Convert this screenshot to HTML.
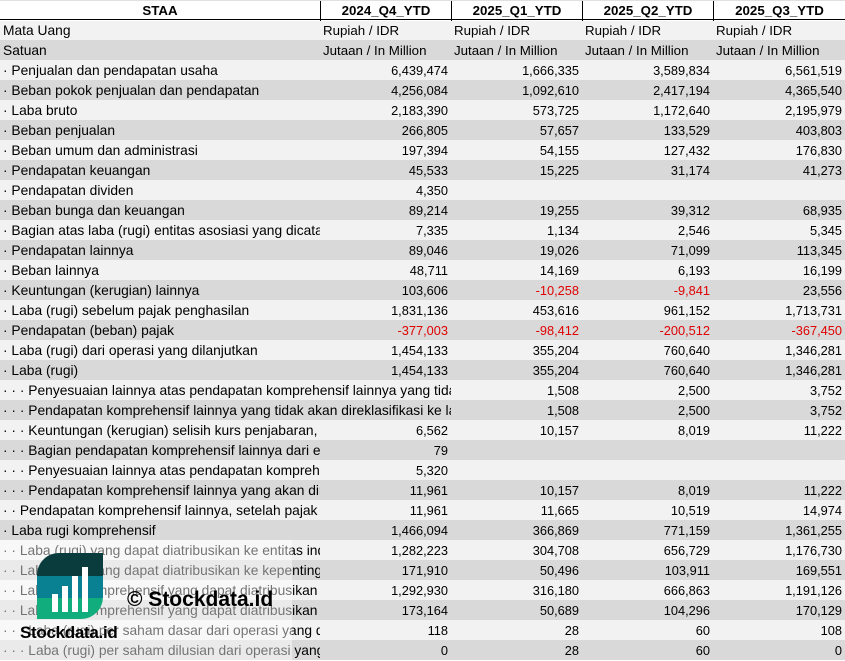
<!DOCTYPE html>
<html><head><meta charset="utf-8"><style>
*{margin:0;padding:0;box-sizing:border-box}
body{width:845px;height:661px;overflow:hidden;background:#fff;font-family:"Liberation Sans",Calibri,sans-serif;font-size:13.3px;color:#000;position:relative}
.r{position:absolute;left:0;width:845px;height:20px;line-height:21px}
.l{background:#f2f2f2}.g{background:#d9d9d9}
.c{position:absolute;top:0;height:20px;white-space:nowrap;overflow:hidden}
.lab{left:3px;width:317px;font-size:13.8px}
.n{text-align:right;font-size:12.8px}
.n1{left:320px;width:128px}.n2{left:451px;width:128px}.n3{left:582px;width:128px}.n4{left:713px;width:129px}
.t1{left:323px}.t2{left:454px}.t3{left:585px}.t4{left:716px}
.red{color:#e00000}
.h{font-weight:bold;text-align:center;border-bottom:1px solid #000;border-top:1px solid #e0e0e0;line-height:19px}
.h .c{border-right:1px solid #000}
</style></head><body>
<div class="r h" style="top:0"><div class="c" style="left:0;width:321px">STAA</div><div class="c" style="left:321px;width:131px">2024_Q4_YTD</div><div class="c" style="left:452px;width:131px">2025_Q1_YTD</div><div class="c" style="left:583px;width:131px">2025_Q2_YTD</div><div class="c" style="left:714px;width:131px;border-right:none">2025_Q3_YTD</div></div>
<div class="r l" style="top:21px;height:19px;line-height:20px"><div class="c lab">Mata Uang</div><div class="c t1">Rupiah / IDR</div><div class="c t2">Rupiah / IDR</div><div class="c t3">Rupiah / IDR</div><div class="c t4">Rupiah / IDR</div></div>
<div class="r g" style="top:40px"><div class="c lab">Satuan</div><div class="c t1">Jutaan / In Million</div><div class="c t2">Jutaan / In Million</div><div class="c t3">Jutaan / In Million</div><div class="c t4">Jutaan / In Million</div></div>
<div id="rows"></div>
<div style="position:absolute;left:0;top:540px;width:292px;height:121px;background:rgba(255,255,255,0.45)"></div>
<div style="position:absolute;left:37px;top:553px;width:66px;height:66px;border-radius:22px 0 22px 0;overflow:hidden">
<div style="height:23px;background:#0a3c3d"></div><div style="height:22px;background:#0a8093"></div><div style="height:21px;background:#12ad7c"></div>
<div style="position:absolute;left:15px;top:41px;width:6px;height:18px;background:#fff"></div>
<div style="position:absolute;left:25px;top:33px;width:6px;height:26px;background:#fff"></div>
<div style="position:absolute;left:35px;top:23px;width:6px;height:36px;background:#fff"></div>
<div style="position:absolute;left:45px;top:14px;width:6px;height:45px;background:#fff"></div>
</div>
<div style="position:absolute;left:20px;top:622px;font-weight:bold;font-size:17px;letter-spacing:-0.3px;line-height:22px">Stockdata.id</div>
<div style="position:absolute;left:127px;top:586px;font-weight:bold;font-size:21px;line-height:28px">© Stockdata.id</div>
<script>
var d=[
["· Penjualan dan pendapatan usaha","6,439,474","1,666,335","3,589,834","6,561,519"],
["· Beban pokok penjualan dan pendapatan","4,256,084","1,092,610","2,417,194","4,365,540"],
["· Laba bruto","2,183,390","573,725","1,172,640","2,195,979"],
["· Beban penjualan","266,805","57,657","133,529","403,803"],
["· Beban umum dan administrasi","197,394","54,155","127,432","176,830"],
["· Pendapatan keuangan","45,533","15,225","31,174","41,273"],
["· Pendapatan dividen","4,350","","",""],
["· Beban bunga dan keuangan","89,214","19,255","39,312","68,935"],
["· Bagian atas laba (rugi) entitas asosiasi yang dicatat","7,335","1,134","2,546","5,345"],
["· Pendapatan lainnya","89,046","19,026","71,099","113,345"],
["· Beban lainnya","48,711","14,169","6,193","16,199"],
["· Keuntungan (kerugian) lainnya","103,606","-10,258","-9,841","23,556"],
["· Laba (rugi) sebelum pajak penghasilan","1,831,136","453,616","961,152","1,713,731"],
["· Pendapatan (beban) pajak","-377,003","-98,412","-200,512","-367,450"],
["· Laba (rugi) dari operasi yang dilanjutkan","1,454,133","355,204","760,640","1,346,281"],
["· Laba (rugi)","1,454,133","355,204","760,640","1,346,281"],
["· · · Penyesuaian lainnya atas pendapatan komprehensif lainnya yang tidak akan direklasifikasi","","1,508","2,500","3,752"],
["· · · Pendapatan komprehensif lainnya yang tidak akan direklasifikasi ke laba rugi","","1,508","2,500","3,752"],
["· · · Keuntungan (kerugian) selisih kurs penjabaran, setelah pajak","6,562","10,157","8,019","11,222"],
["· · · Bagian pendapatan komprehensif lainnya dari entitas asosiasi","79","","",""],
["· · · Penyesuaian lainnya atas pendapatan komprehensif","5,320","","",""],
["· · · Pendapatan komprehensif lainnya yang akan direklasifikasi","11,961","10,157","8,019","11,222"],
["· · Pendapatan komprehensif lainnya, setelah pajak","11,961","11,665","10,519","14,974"],
["· Laba rugi komprehensif","1,466,094","366,869","771,159","1,361,255"],
["· · Laba (rugi) yang dapat diatribusikan ke entitas induk","1,282,223","304,708","656,729","1,176,730"],
["· · Laba (rugi) yang dapat diatribusikan ke kepentingan non pengendali","171,910","50,496","103,911","169,551"],
["· · Laba rugi komprehensif yang dapat diatribusikan ke entitas induk","1,292,930","316,180","666,863","1,191,126"],
["· · Laba rugi komprehensif yang dapat diatribusikan ke kepentingan","173,164","50,689","104,296","170,129"],
["· · · Laba (rugi) per saham dasar dari operasi yang dilanjutkan","118","28","60","108"],
["· · · Laba (rugi) per saham dilusian dari operasi yang dilanjutkan","0","28","60","0"]];
var h="";
d.forEach(function(r,i){
 var y=60+i*20, w=(r[1]===""?448:317);
 h+='<div class="r '+(i%2?'g':'l')+'" style="top:'+y+'px"><div class="c lab" style="width:'+w+'px">'+r[0]+'</div>';
 for(var k=1;k<5;k++){ if(r[k]) h+='<div class="c n n'+k+(r[k][0]=='-'?' red':'')+'">'+r[k]+'</div>'; }
 h+='</div>';
});
document.getElementById('rows').innerHTML=h;
</script>
</body></html>
